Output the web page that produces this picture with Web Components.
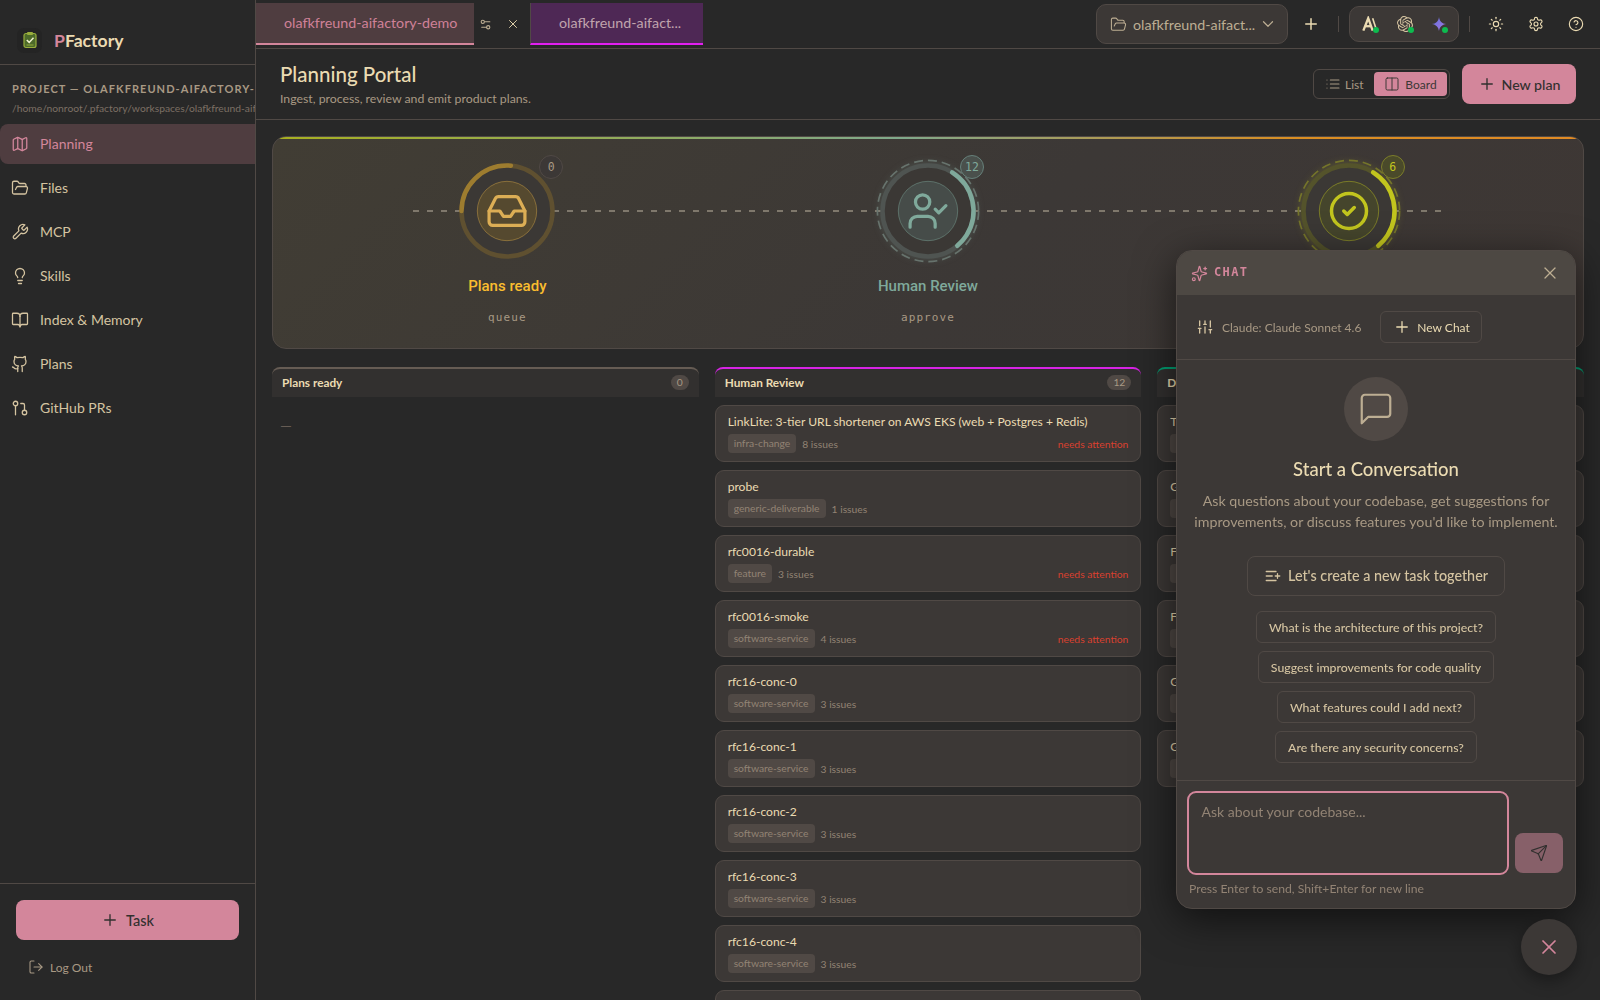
<!DOCTYPE html>
<html lang="en"><head><meta charset="utf-8"><title>PFactory</title>
<style>
html,body{margin:0;height:100%;background:#282828;overflow:hidden}
body{font-family:"Lato","Noto Sans",sans-serif;color:#ebdbb2;--mono:"DejaVu Sans Mono","Liberation Mono",monospace}
</style></head><body>
<pf-app></pf-app>
<script>
const P={
map:'<path d="M14.106 5.553a2 2 0 0 0 1.788 0l3.659-1.83A1 1 0 0 1 21 4.619v12.764a1 1 0 0 1-.553.894l-4.553 2.277a2 2 0 0 1-1.788 0l-4.212-2.106a2 2 0 0 0-1.788 0l-3.659 1.83A1 1 0 0 1 3 19.381V6.618a1 1 0 0 1 .553-.894l4.553-2.277a2 2 0 0 1 1.788 0z"/><path d="M15 5.764v15"/><path d="M9 3.236v15"/>',
folder:'<path d="m6 14 1.5-2.9A2 2 0 0 1 9.24 10H20a2 2 0 0 1 1.94 2.5l-1.54 6a2 2 0 0 1-1.95 1.5H4a2 2 0 0 1-2-2V5a2 2 0 0 1 2-2h3.9a2 2 0 0 1 1.69.9l.81 1.2a2 2 0 0 0 1.67.9H18a2 2 0 0 1 2 2v2"/>',
wrench:'<path d="M14.7 6.3a1 1 0 0 0 0 1.4l1.6 1.6a1 1 0 0 0 1.4 0l3.77-3.77a6 6 0 0 1-7.94 7.94l-6.91 6.91a2.12 2.12 0 0 1-3-3l6.91-6.91a6 6 0 0 1 7.94-7.94l-3.76 3.76z"/>',
bulb:'<path d="M15 14c.2-1 .7-1.7 1.5-2.5 1-.9 1.5-2.2 1.5-3.5A6 6 0 0 0 6 8c0 1 .2 2.2 1.5 3.5.7.7 1.3 1.5 1.5 2.5"/><path d="M9 18h6"/><path d="M10 22h4"/>',
book:'<path d="M12 7v14"/><path d="M3 18a1 1 0 0 1-1-1V4a1 1 0 0 1 1-1h5a4 4 0 0 1 4 4 4 4 0 0 1 4-4h5a1 1 0 0 1 1 1v13a1 1 0 0 1-1 1h-6a3 3 0 0 0-3 3 3 3 0 0 0-3-3z"/>',
github:'<path d="M15 22v-4a4.8 4.8 0 0 0-1-3.5c3 0 6-2 6-5.5.08-1.25-.27-2.48-1-3.5.28-1.15.28-2.35 0-3.5 0 0-1 0-3 1.5-2.64-.5-5.36-.5-8 0C6 2 5 2 5 2c-.3 1.15-.3 2.35 0 3.5A5.403 5.403 0 0 0 4 9c0 3.5 3 5.5 6 5.5-.39.49-.68 1.05-.85 1.65-.17.6-.22 1.23-.15 1.85v4"/><path d="M9 18c-4.51 2-5-2-7-2"/>',
pr:'<circle cx="18" cy="18" r="3"/><circle cx="6" cy="6" r="3"/><path d="M13 6h3a2 2 0 0 1 2 2v7"/><path d="M6 9v12"/>',
settings2:'<path d="M20 7h-9"/><path d="M14 17H5"/><circle cx="17" cy="17" r="3"/><circle cx="7" cy="7" r="3"/>',
x:'<path d="M18 6 6 18"/><path d="m6 6 12 12"/>',
chev:'<path d="m6 9 6 6 6-6"/>',
plus:'<path d="M5 12h14"/><path d="M12 5v14"/>',
sun:'<circle cx="12" cy="12" r="4"/><path d="M12 2v2"/><path d="M12 20v2"/><path d="m4.93 4.93 1.41 1.41"/><path d="m17.66 17.66 1.41 1.41"/><path d="M2 12h2"/><path d="M20 12h2"/><path d="m6.34 17.66-1.41 1.41"/><path d="m19.07 4.93-1.41 1.41"/>',
gear:'<path d="M12.22 2h-.44a2 2 0 0 0-2 2v.18a2 2 0 0 1-1 1.73l-.43.25a2 2 0 0 1-2 0l-.15-.08a2 2 0 0 0-2.73.73l-.22.38a2 2 0 0 0 .73 2.73l.15.1a2 2 0 0 1 1 1.72v.51a2 2 0 0 1-1 1.74l-.15.09a2 2 0 0 0-.73 2.73l.22.38a2 2 0 0 0 2.73.73l.15-.08a2 2 0 0 1 2 0l.43.25a2 2 0 0 1 1 1.73V20a2 2 0 0 0 2 2h.44a2 2 0 0 0 2-2v-.18a2 2 0 0 1 1-1.73l.43-.25a2 2 0 0 1 2 0l.15.08a2 2 0 0 0 2.73-.73l.22-.39a2 2 0 0 0-.73-2.73l-.15-.08a2 2 0 0 1-1-1.74v-.5a2 2 0 0 1 1-1.74l.15-.09a2 2 0 0 0 .73-2.73l-.22-.38a2 2 0 0 0-2.73-.73l-.15.08a2 2 0 0 1-2 0l-.43-.25a2 2 0 0 1-1-1.73V4a2 2 0 0 0-2-2z"/><circle cx="12" cy="12" r="3"/>',
help:'<circle cx="12" cy="12" r="10"/><path d="M9.09 9a3 3 0 0 1 5.83 1c0 2-3 3-3 3"/><path d="M12 17h.01"/>',
list:'<path d="M3 12h.01"/><path d="M3 18h.01"/><path d="M3 6h.01"/><path d="M8 12h13"/><path d="M8 18h13"/><path d="M8 6h13"/>',
cols:'<rect x="3" y="3" width="18" height="18" rx="2"/><path d="M12 3v18"/>',
inbox:'<path d="M22 12h-6l-2 3h-4l-2-3H2"/><path d="M5.45 5.11 2 12v6a2 2 0 0 0 2 2h16a2 2 0 0 0 2-2v-6l-3.45-6.89A2 2 0 0 0 16.76 4H7.24a2 2 0 0 0-1.79 1.11z"/>',
usercheck:'<path d="M16 21v-2a4 4 0 0 0-4-4H6a4 4 0 0 0-4 4v2"/><circle cx="9" cy="7" r="4"/><path d="m16 11 2 2 4-4"/>',
check:'<circle cx="12" cy="12" r="10"/><path d="m9 12 2 2 4-4"/>',
sparkles:'<path d="M9.937 15.5A2 2 0 0 0 8.5 14.063l-6.135-1.582a.5.5 0 0 1 0-.962L8.5 9.936A2 2 0 0 0 9.937 8.5l1.582-6.135a.5.5 0 0 1 .963 0L14.063 8.5A2 2 0 0 0 15.5 9.937l6.135 1.581a.5.5 0 0 1 0 .964L15.5 14.063a2 2 0 0 0-1.437 1.437l-1.582 6.135a.5.5 0 0 1-.963 0z"/><path d="M20 3v4"/><path d="M22 5h-4"/><circle cx="4" cy="20" r="2"/>',
sliders:'<path d="M4 21v-7"/><path d="M4 10V3"/><path d="M12 21v-9"/><path d="M12 8V3"/><path d="M20 21v-5"/><path d="M20 12V3"/><path d="M2 14h4"/><path d="M10 8h4"/><path d="M18 16h4"/>',
msg:'<path d="M21 15a2 2 0 0 1-2 2H7l-4 4V5a2 2 0 0 1 2-2h14a2 2 0 0 1 2 2z"/>',
listplus:'<path d="M11 12H3"/><path d="M16 6H3"/><path d="M16 18H3"/><path d="M18 9v6"/><path d="M21 12h-6"/>',
send:'<path d="M14.536 21.686a.5.5 0 0 0 .937-.024l6.5-19a.496.496 0 0 0-.635-.635l-19 6.5a.5.5 0 0 0-.024.937l7.93 3.18a2 2 0 0 1 1.112 1.11z"/><path d="m21.854 2.147-10.94 10.939"/>',
logout:'<path d="m16 17 5-5-5-5"/><path d="M21 12H9"/><path d="M9 21H5a2 2 0 0 1-2-2V5a2 2 0 0 1 2-2h4"/>'
};
const def=(n,c)=>customElements.define(n,c);
class Base extends HTMLElement{
  connectedCallback(){ if(!this.shadowRoot){this.attachShadow({mode:'open'}).innerHTML=this.render();} }
  a(n,d=''){return this.getAttribute(n)??d}
}
def('pf-icon',class extends Base{render(){const s=this.a('size',16),w=this.a('sw',2);
  return `<style>:host{display:inline-flex;flex:none;width:${s}px;height:${s}px}svg{display:block}</style><svg width="${s}" height="${s}" viewBox="0 0 24 24" fill="none" stroke="currentColor" stroke-width="${w}" stroke-linecap="round" stroke-linejoin="round">${P[this.a('name')]||''}</svg>`}});

def('pf-app',class extends Base{render(){return `<style>
:host{display:flex;width:1600px;height:1000px;overflow:hidden;background:#282828}
.main{flex:1;min-width:0;display:flex;flex-direction:column;overflow:hidden}
.content{flex:1;min-height:0;overflow:hidden;padding:16px 16px 0;display:flex;flex-direction:column;gap:18px}
</style>
<pf-sidebar></pf-sidebar>
<div class="main"><pf-topbar></pf-topbar><pf-page-header></pf-page-header>
<div class="content"><pf-pipeline></pf-pipeline><pf-board></pf-board></div></div>
<pf-chat></pf-chat><pf-fab></pf-fab>`}});

def('pf-nav-item',class extends Base{render(){return `<style>
:host{display:flex;align-items:center;gap:11px;height:40px;padding-left:11px;border-radius:8px 0 0 8px;font-size:14px;color:#d5c4a1;box-sizing:border-box}
:host([active]){background:#4f3d40;color:#d3869b}
span{margin-top:-1px}
</style><pf-icon name="${this.a('icon')}" size="18" sw="1.7"></pf-icon><span><slot></slot></span>`}});

def('pf-sidebar',class extends Base{render(){const n=[['map','Planning',1],['folder','Files'],['wrench','MCP'],['bulb','Skills'],['book','Index &amp; Memory'],['github','Plans'],['pr','GitHub PRs']];
return `<style>
:host{display:flex;flex-direction:column;flex:none;width:256px;height:1000px;box-sizing:border-box;border-right:1px solid #504945;overflow:hidden}
.brand{height:65px;box-sizing:border-box;border-bottom:1px solid #504945;display:flex;align-items:center;gap:12px;padding:16px 0 0 17px}
.lg{width:25px;height:25px;border-radius:7px;background:#242424;display:flex;align-items:center;justify-content:center}
.nm{font-size:17.6px;font-weight:700;color:#ebdbb2}.nm b{color:#d3869b;font-weight:700}
.proj{padding:15px 0 0 12px;white-space:nowrap;overflow:hidden;height:59px;box-sizing:border-box}
.t{font-size:11px;font-weight:700;letter-spacing:1.05px;color:#a89984;line-height:18px}
.p{font-size:10.3px;color:#7c6f64;margin-top:1px;line-height:18px}
nav{display:flex;flex-direction:column;gap:4px}
.sp{flex:1}
.foot{border-top:1px solid #504945;height:117px;box-sizing:border-box;padding:16px 16px 0}
.task{height:40px;border-radius:8px;background:#d3869b;color:#32302f;display:flex;align-items:center;justify-content:center;gap:7px;font-size:14.5px;font-weight:500}
.out{display:flex;align-items:center;gap:6px;margin:19px 0 0 12px;font-size:12px;color:#a89984}
</style>
<div class="brand"><div class="lg"><svg width="18" height="18" viewBox="0 0 18 18"><rect x="3" y="2.5" width="12" height="14" rx="2" fill="#4d6a2a" stroke="#98ad3c" stroke-width="1.2"/><rect x="6" y="1" width="6" height="3" rx="1" fill="#98ad3c"/><path d="m5.8 9 2.4 2.4 4.3-4.6" fill="none" stroke="#f2f2d0" stroke-width="1.5"/><path d="M5.5 14h7" stroke="#98ad3c" stroke-width="1"/></svg></div><div class="nm"><b>P</b>Factory</div></div>
<div class="proj"><div class="t">PROJECT — OLAFKFREUND-AIFACTORY-DEMO</div><div class="p">/home/nonroot/.pfactory/workspaces/olafkfreund-aifactory-demo</div></div>
<nav>${n.map(i=>`<pf-nav-item icon="${i[0]}" ${i[2]?'active':''}>${i[1]}</pf-nav-item>`).join('')}</nav>
<div class="sp"></div>
<div class="foot"><div class="task"><pf-icon name="plus" size="18" sw="1.8"></pf-icon>Task</div>
<div class="out"><pf-icon name="logout" size="16" sw="1.6"></pf-icon>Log Out</div></div>`}});

def('pf-tab',class extends Base{render(){return `<style>
:host{display:flex;align-items:center;box-sizing:border-box;height:42px;font-size:14.3px;white-space:nowrap;background:var(--bg);color:var(--fg);border-bottom:2px solid var(--line);padding:0 0 2px 28px;width:var(--w)}
</style><slot></slot>`}});

def('pf-topbar',class extends Base{render(){return `<style>
:host{display:flex;align-items:center;height:49px;box-sizing:border-box;border-bottom:1px solid #504945;flex:none;padding-right:16px;color:#ebdbb2}
.tabs{display:flex;align-items:center;align-self:flex-start;padding-top:3px}
.ic{display:flex;align-items:center;gap:14px;width:56px;padding-left:5px;box-sizing:border-box;color:#bdae93}
.sp{flex:1}
.sel{display:flex;align-items:center;width:192px;height:40px;box-sizing:border-box;background:#3c3836;border:1px solid #504945;border-radius:10px;padding:0 10px 0 13px;color:#bdae93;font-size:14.3px;white-space:nowrap}
.sel span{margin-left:6px;flex:1}
.sep{width:1px;height:16px;background:#504945}
.grp{display:flex;align-items:center;justify-content:space-between;width:110px;height:36px;box-sizing:border-box;background:#3c3836;border:1px solid #504945;border-radius:10px;padding:0 11px 0 12px}
.pv{position:relative;width:16px;height:16px;display:block}
.pv svg{display:block}
.dot{position:absolute;right:-1px;bottom:-1px;width:6px;height:6px;border-radius:50%;background:#0dbb4f}
.r{display:flex;align-items:center}
</style>
<div class="tabs"><pf-tab style="--bg:#4f3d40;--fg:#cf8198;--line:#d3869b;--w:218px">olafkfreund-aifactory-demo</pf-tab>
<div class="ic"><pf-icon name="settings2" size="13"></pf-icon><pf-icon name="x" size="14" sw="1.6" style="color:#ebdbb2"></pf-icon></div>
<pf-tab style="--bg:#4e2855;--fg:#c0a4ad;--line:#e11ff0;--w:173px;border-left:1px solid #504945">olafkfreund-aifact...</pf-tab></div>
<div class="sp"></div>
<div class="r"><div class="sel"><pf-icon name="folder" size="17" sw="1.5"></pf-icon><span>olafkfreund-aifact...</span><pf-icon name="chev" size="18" sw="1.6"></pf-icon></div>
<pf-icon name="plus" size="18" style="margin:0 18px 0 14px"></pf-icon><div class="sep"></div>
<div class="grp" style="margin-left:10px">
<span class="pv"><svg width="16" height="16" viewBox="0 0 18 18" fill="none" stroke="#ebdbb2" stroke-width="2.6"><path d="M1.5 16.5 7 2.5 12 16.5"/><path d="M4 11.5h6"/><path d="M12 2.5l4.5 14" stroke-width="1.8"/></svg><i class="dot"></i></span>
<span class="pv"><svg width="16" height="16" viewBox="0 0 24 24" fill="#d5c4a1"><path d="M22.2819 9.8211a5.9847 5.9847 0 0 0-.5157-4.9108 6.0462 6.0462 0 0 0-6.5098-2.9A6.0651 6.0651 0 0 0 4.9807 4.1818a5.9847 5.9847 0 0 0-3.9977 2.9 6.0462 6.0462 0 0 0 .7427 7.0966 5.98 5.98 0 0 0 .511 4.9107 6.051 6.051 0 0 0 6.5146 2.9001A5.9847 5.9847 0 0 0 13.2599 24a6.0557 6.0557 0 0 0 5.7718-4.2058 5.9894 5.9894 0 0 0 3.9977-2.9001 6.0557 6.0557 0 0 0-.7475-7.0729zm-9.022 12.6081a4.4755 4.4755 0 0 1-2.8764-1.0408l.1419-.0804 4.7783-2.7582a.7948.7948 0 0 0 .3927-.6813v-6.7369l2.02 1.1686a.071.071 0 0 1 .038.052v5.5826a4.504 4.504 0 0 1-4.4945 4.4944zm-9.6607-4.1254a4.4708 4.4708 0 0 1-.5346-3.0137l.142.0852 4.783 2.7582a.7712.7712 0 0 0 .7806 0l5.8428-3.3685v2.3324a.0804.0804 0 0 1-.0332.0615L9.74 19.9502a4.4992 4.4992 0 0 1-6.1408-1.6464zM2.3408 7.8956a4.485 4.485 0 0 1 2.3655-1.9728V11.6a.7664.7664 0 0 0 .3879.6765l5.8144 3.3543-2.0201 1.1685a.0757.0757 0 0 1-.071 0l-4.8303-2.7865A4.504 4.504 0 0 1 2.3408 7.872zm16.5963 3.8558L13.1038 8.364 15.1192 7.2a.0757.0757 0 0 1 .071 0l4.8303 2.7913a4.4944 4.4944 0 0 1-.6765 8.1042v-5.6772a.79.79 0 0 0-.407-.667zm2.0107-3.0231l-.142-.0852-4.7735-2.7818a.7759.7759 0 0 0-.7854 0L9.409 9.2297V6.8974a.0662.0662 0 0 1 .0284-.0615l4.8303-2.7866a4.4992 4.4992 0 0 1 6.6802 4.66zM8.3065 12.863l-2.02-1.1638a.0804.0804 0 0 1-.038-.0567V6.0742a4.4992 4.4992 0 0 1 7.3757-3.4537l-.142.0805L8.704 5.459a.7948.7948 0 0 0-.3927.6813zm1.0976-2.3654l2.602-1.4998 2.6069 1.4998v2.9994l-2.5974 1.4997-2.6067-1.4997Z"/></svg><i class="dot"></i></span>
<span class="pv"><svg width="16" height="16" viewBox="0 0 18 18"><defs><linearGradient id="g" x1="0" y1="0" x2="1" y2="1"><stop offset="0" stop-color="#5f6fd8"/><stop offset="1" stop-color="#a878e8"/></linearGradient></defs><path d="M9 1c.5 4.5 3.5 7.5 8 8-4.500.5-7.500 3.500-8 8-.5-4.500-3.500-7.500-8-8 4.500-.5 7.500-3.500 8-8z" fill="url(#g)"/></svg><i class="dot"></i></span>
</div>
<div class="sep" style="margin-left:10px"></div>
<pf-icon name="sun" size="16" sw="1.7" style="margin-left:18px"></pf-icon>
<pf-icon name="gear" size="16" sw="1.7" style="margin-left:24px"></pf-icon>
<pf-icon name="help" size="16" sw="1.7" style="margin-left:24px"></pf-icon></div>`}});

def('pf-page-header',class extends Base{render(){return `<style>
:host{display:flex;align-items:center;height:71px;box-sizing:border-box;border-bottom:1px solid #504945;padding:0 24px;flex:none}
.l{flex:1}.h{font-size:20.5px;font-weight:500;color:#ebdbb2;line-height:28px;margin-top:-2px}
.s{font-size:12.3px;color:#a89984;line-height:16px;margin-top:3px}
.tog{display:flex;align-items:center;width:137px;height:30px;box-sizing:border-box;border:1px solid #504945;border-radius:6px;padding:0 2px 0 11px;font-size:12px;color:#a89984;margin-right:12px;justify-content:space-between}
.tog>div{display:flex;align-items:center;gap:4px}
.tog>.on{gap:5px}
.on{background:#d3869b;color:#3c3836;width:73px;height:24px;border-radius:4px;justify-content:center;box-sizing:border-box}
.new{display:flex;align-items:center;justify-content:center;gap:6px;width:114px;height:40px;background:#d3869b;color:#32302f;border-radius:8px;font-size:14.2px;font-weight:500}
</style><div class="l"><div class="h">Planning Portal</div><div class="s">Ingest, process, review and emit product plans.</div></div>
<div class="tog"><div><pf-icon name="list" size="16" sw="1.6"></pf-icon>List</div><div class="on"><pf-icon name="cols" size="16" sw="1.5"></pf-icon>Board</div></div>
<div class="new"><pf-icon name="plus" size="18" sw="1.8"></pf-icon>New plan</div>`}});

def('pf-stage',class extends Base{render(){const c=this.a('color'),b=this.a('base'),f=this.a('fill'),active=this.hasAttribute('active'),st=+this.a('start'),len=+this.a('len');
return `<style>
:host{display:flex;flex-direction:column;align-items:center;padding-top:19px;position:relative;z-index:1}
.ring{position:relative;width:110px;height:110px}
svg.r{display:block;overflow:visible}
.ic{position:absolute;left:50%;top:50%;transform:translate(-50%,-50%);display:flex;color:${this.a('ic',c)}}
.badge{position:absolute;left:calc(50% + 32px);top:-1px;width:24px;height:24px;box-sizing:border-box;border-radius:50%;background:${this.a('bbg','#3c3836')};border:1px solid ${this.a('bb','#504945')};color:${this.a('bc','#a89984')};font:500 11.5px var(--mono);display:flex;align-items:center;justify-content:center}
.n{font:500 15px Roboto,"Lato",sans-serif;color:${c};margin-top:10px;line-height:20px;height:20px}
.d{font:11px var(--mono);letter-spacing:1.1px;color:#a89984;margin-top:14px;line-height:16px;height:16px}
</style><div class="ring"><svg class="r" width="110" height="110" viewBox="0 0 110 110">
<circle cx="55" cy="55" r="45.5" fill="#3b3835" stroke="${b}" stroke-width="4.5" style="${active?`filter:drop-shadow(0 0 4px ${c}40)`:''}"/>
${active?`<circle cx="55" cy="55" r="50.6" fill="none" stroke="${this.a('dash')}" stroke-width="1.7" stroke-dasharray="9 5"/>`:''}
<circle cx="55" cy="55" r="45.5" fill="none" stroke="${c}" stroke-opacity="${this.a('op',1)}" stroke-width="4.5" stroke-linecap="round" pathLength="360" stroke-dasharray="${len} ${360-len}" transform="rotate(${st-90} 55 55)"/>
<circle cx="55" cy="55" r="29.7" fill="${f}" stroke="${this.a('st',c)}" stroke-opacity=".45" stroke-width="1"/></svg>
<div class="ic"><pf-icon name="${this.a('icon')}" size="${this.a('is',43)}" sw="${this.a('isw',1.8)}"></pf-icon></div>
<div class="badge">${this.a('count')}</div></div>
<div class="n">${this.a('label')}</div><div class="d">${this.a('sub')}</div>`}});

def('pf-pipeline',class extends Base{render(){return `<style>
:host{display:block;position:relative;flex:none;height:213px;box-sizing:border-box;border:1px solid #504945;border-radius:14px;background:linear-gradient(135deg,#413d34 0%,#3c3836 55%,#3e3734 100%);overflow:hidden}
.bar{position:absolute;left:0;right:0;top:-1px;height:3px;background:linear-gradient(90deg,#a8b020 0%,#7fa98c 48%,#d98e22 78%,#e08a24 100%)}
.line{position:absolute;top:73px;left:140px;right:142px;height:2px;background:repeating-linear-gradient(90deg,#7f786c 0 6px,transparent 6px 14px)}
.g{display:grid;grid-template-columns:repeat(3,1fr);padding:0 24px}
</style><div class="bar"></div><div class="line"></div><div class="g">
<pf-stage color="#fabd2f" base="#5f5030" fill="#55492f" st="#d8a84a" ic="#dcae55" op=".4" start="270" len="95" icon="inbox" count="0" label="Plans ready" sub="queue"></pf-stage>
<pf-stage active color="#7fa99b" base="#4f5451" dash="#67736d" fill="#464c49" start="32" len="108" icon="usercheck" count="12" bc="#7fa99b" bbg="#4a504c" bb="#66807a" label="Human Review" sub="approve"></pf-stage>
<pf-stage active color="#c2c51e" base="#54532b" dash="#74742a" fill="#45452c" start="32" len="108" icon="check" is="42" isw="2" count="6" bc="#c2c51e" bbg="#4a4a2a" bb="#7c7d2a"></pf-stage>
</div>`}});

def('pf-card',class extends Base{render(){return `<style>
:host{display:block;height:57px;box-sizing:border-box;border:1px solid #504945;border-radius:9px;background:#3c3836;padding:7px 12px 0;flex:none}
.t{font-size:12.1px;line-height:17px;color:#ebdbb2;white-space:nowrap}
.m{display:flex;align-items:center;margin-top:4px;font-size:10.3px;color:#928374;gap:6px;height:19px}
.tag{background:#504945;border-radius:4px;padding:0 6px;line-height:19px;color:#928374}
.n{flex:1}.a{color:#d9402f}
</style><div class="t"><slot></slot></div><div class="m">${this.a('tag')?`<span class="tag">${this.a('tag')}</span>`:'<span class="tag">&nbsp;&nbsp;&nbsp;&nbsp;&nbsp;&nbsp;&nbsp;&nbsp;&nbsp;&nbsp;&nbsp;&nbsp;</span>'}<span class="n">${this.a('issues')}</span>${this.hasAttribute('attn')?'<span class="a">needs attention</span>':''}</div>`}});

def('pf-column',class extends Base{render(){return `<style>
:host{display:flex;flex-direction:column;min-width:0;gap:8px}
.h{display:flex;align-items:center;justify-content:space-between;height:30px;box-sizing:border-box;border-top:2px solid var(--c);border-radius:8px 8px 0 0;background:#32302f;padding:0 10px 1px 10px;font-size:11.8px;font-weight:700;color:#ebdbb2}
.c{background:#504945;color:#a89984;font-size:10.3px;font-weight:400;border-radius:8px;padding:0 6px;line-height:15px}
</style><div class="h"><span>${this.a('heading')}</span><span class="c">${this.a('count')}</span></div><slot></slot>`}});

def('pf-board',class extends Base{render(){
const hr=[['LinkLite: 3-tier URL shortener on AWS EKS (web + Postgres + Redis)','infra-change','8 issues',1],['probe','generic-deliverable','1 issues'],['rfc0016-durable','feature','3 issues',1],['rfc0016-smoke','software-service','4 issues',1],
['rfc16-conc-0','software-service','3 issues'],['rfc16-conc-1','software-service','3 issues'],['rfc16-conc-2','software-service','3 issues'],['rfc16-conc-3','software-service','3 issues'],['rfc16-conc-4','software-service','3 issues'],['&nbsp;','','']];
return `<style>
:host{display:grid;grid-template-columns:repeat(3,1fr);gap:16px;align-items:start}
.e{font-size:15px;color:#665c54;padding:11px 8px;line-height:18px}
</style>
<pf-column heading="Plans ready" count="0" style="--c:#665c54"><div class="e">—</div></pf-column>
<pf-column heading="Human Review" count="12" style="--c:#d624e4">${hr.map(c=>`<pf-card tag="${c[1]}" issues="${c[2]}" ${c[3]?'attn':''}>${c[0]}</pf-card>`).join('')}</pf-column>
<pf-column heading="D" count="6" style="--c:#00a274">${['T','G','F','F','G','G'].map(t=>`<pf-card>${t}</pf-card>`).join('')}</pf-column>`}});

def('pf-chat',class extends Base{render(){const q=['What is the architecture of this project?','Suggest improvements for code quality','What features could I add next?','Are there any security concerns?'];
return `<style>
:host{position:fixed;left:1176px;top:250px;width:400px;height:659px;box-sizing:border-box;display:flex;flex-direction:column;background:#3c3836;border:1px solid #504945;border-radius:16px;box-shadow:0 10px 40px rgba(0,0,0,.6);overflow:hidden;z-index:10}
.hd{flex:none;height:44px;background:#4d4843;display:flex;align-items:center;padding:0 15px 0 14px;color:#d3869b}
.hd b{font:700 12px var(--mono);letter-spacing:1.4px;margin:-2px 0 0 6px;flex:1}
.hd pf-icon:last-child{color:#bdae93}
.tb{flex:none;height:65px;box-sizing:border-box;border-bottom:1px solid #504945;display:flex;align-items:center;padding:0 0 0 20px;font-size:12px;color:#a89984}
.tb span{margin-left:9px}
.nc{display:flex;align-items:center;gap:6px;width:102px;height:32px;box-sizing:border-box;border:1px solid #504945;border-radius:6px;margin-left:19px;padding-left:12px;color:#ebdbb2;font-size:12px}
.bd{flex:1;display:flex;flex-direction:column;align-items:center;min-height:0;padding-top:17px;box-sizing:border-box}
.ci{width:64px;height:64px;border-radius:50%;background:#504945;display:flex;align-items:center;justify-content:center;color:#bdae93}
h3{margin:16px 0 0;font-size:18.5px;line-height:24px;font-weight:500;color:#ebdbb2}
p{margin:10px 0 0;font-size:14.25px;line-height:20.5px;color:#a89984;text-align:center;width:380px}
.mk{display:flex;align-items:center;gap:6px;height:40px;box-sizing:border-box;border:1px solid #504945;border-radius:8px;padding:0 16px;margin-top:23.5px;font-size:14.35px;color:#d5c4a1;font-weight:500;white-space:nowrap}
.qs{display:flex;flex-direction:column;align-items:center;gap:8px;margin-top:15.500px}
.q{height:32px;box-sizing:border-box;border:1px solid #504945;border-radius:6px;padding:0 12px;display:flex;align-items:center;font-size:12.3px;color:#d5c4a1;font-weight:500;white-space:nowrap}
.ft{flex:none;height:128px;box-sizing:border-box;border-top:1px solid #504945;padding:10px 12px 0 10px}
.row{display:flex;align-items:flex-end;gap:6px}
.ta{width:322px;height:84px;box-sizing:border-box;border:2.5px solid #d3869b;border-radius:9px;padding:9px 12.5px;font-size:14px;line-height:20px;color:#928374}
.snd{width:48px;height:40px;border-radius:8px;background:#876069;display:flex;align-items:center;justify-content:center;color:#32302f;margin-bottom:2px}
.hint{font-size:12.2px;color:#928374;margin:6px 0 0 2px;line-height:16px}
</style>
<div class="hd"><pf-icon name="sparkles" size="17" sw="1.7"></pf-icon><b>CHAT</b><pf-icon name="x" size="20" sw="1.5"></pf-icon></div>
<div class="tb"><pf-icon name="sliders" size="16" style="color:#d5c4a1"></pf-icon><span>Claude: Claude Sonnet 4.6</span><div class="nc"><pf-icon name="plus" size="18" sw="1.7"></pf-icon>New Chat</div></div>
<div class="bd"><div class="ci"><pf-icon name="msg" size="38" sw="1.4"></pf-icon></div><h3>Start a Conversation</h3>
<p>Ask questions about your codebase, get suggestions for improvements, or discuss features you'd like to implement.</p>
<div class="mk"><pf-icon name="listplus" size="18" sw="1.7"></pf-icon>Let's create a new task together</div>
<div class="qs">${q.map(t=>`<div class="q">${t}</div>`).join('')}</div></div>
<div class="ft"><div class="row"><div class="ta">Ask about your codebase...</div><div class="snd"><pf-icon name="send" size="18" sw="1.5"></pf-icon></div></div><div class="hint">Press Enter to send, Shift+Enter for new line</div></div>`}});

def('pf-fab',class extends Base{render(){return `<style>
:host{position:fixed;left:1521px;top:919px;width:56px;height:56px;border-radius:50%;background:#3c3836;color:#d3869b;display:flex;align-items:center;justify-content:center;box-shadow:0 6px 16px rgba(0,0,0,.35);z-index:11}
</style><pf-icon name="x" size="24" sw="1.7"></pf-icon>`}});
</script>
</body></html>
